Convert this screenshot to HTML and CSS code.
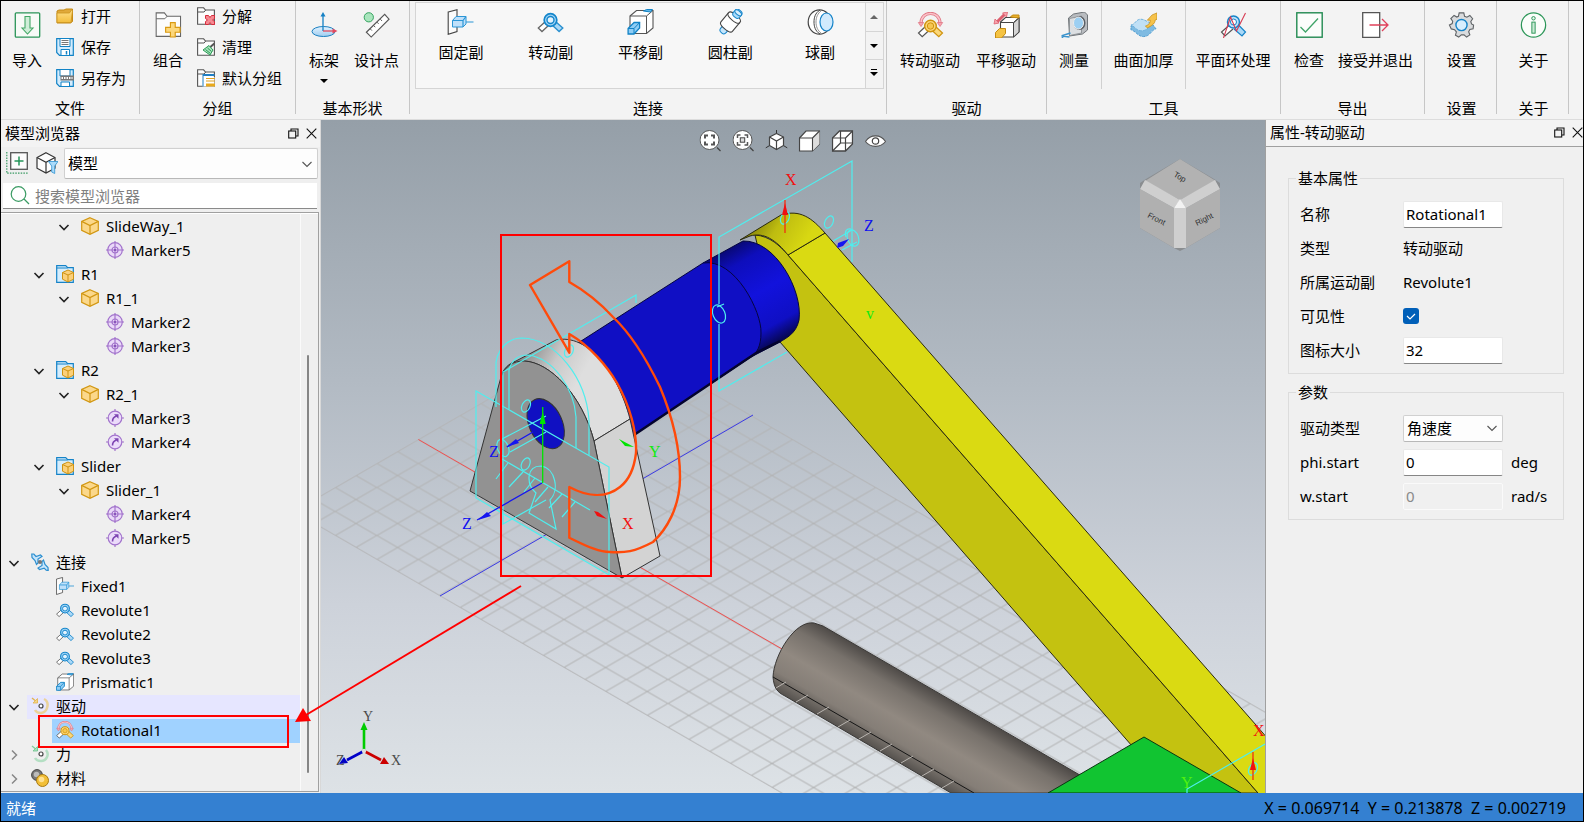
FILE: index.html
```html
<!DOCTYPE html>
<html lang="zh-CN">
<head>
<meta charset="utf-8">
<title>模型浏览器</title>
<link rel="stylesheet" href="styles.css">
</head>
<body>
<svg class="defs" aria-hidden="true">
  <defs>
    <linearGradient id="gold" x1="0" y1="0" x2="0" y2="1"><stop offset="0" stop-color="#ffe08a"/><stop offset="1" stop-color="#f3bd3c"/></linearGradient>
    <linearGradient id="sky" x1="0" y1="0" x2="0" y2="1"><stop offset="0" stop-color="#e2f2ff"/><stop offset="1" stop-color="#9fcdf0"/></linearGradient>
    <symbol id="import" viewBox="0 0 26 26"><rect x=".8" y=".8" width="24.400" height="24.400" rx="1" fill="#f7faf7" stroke="#2a9458" stroke-width="1.300"/><path d="M10.500 4.500h5v11.500h3l-5.500 6-5.500-6h3z" fill="#cfeed8" stroke="#43a766" stroke-width="1.100"/></symbol>
    <symbol id="open" viewBox="0 0 18 16"><path d="M1 3l2-1h5l2-1h6.500v12.500l-2 1.500H1z" fill="#e0a93a" stroke="#c58a14"/><path d="M1 5h12.500l2-3v0l1 .5-1.500 12H1z" fill="url(#gold)" stroke="#cc9420" stroke-width=".8"/></symbol>
    <symbol id="save" viewBox="0 0 18 18"><path d="M.7.7h16.600v16.600H3.500L.7 14.500z" fill="#d4ecfd" stroke="#1283c6" stroke-width="1.200"/><path d="M4 1v7.500h10V1" fill="#fff" stroke="#1283c6"/><path d="M5.500 2.500h7M5.500 4.500h7M5.500 6.500h7" stroke="#666" stroke-width=".9"/><path d="M5 17v-5.500h8.500V17" fill="#fff" stroke="#1283c6"/><path d="M10.500 13v3.500" stroke="#1283c6" stroke-width="1.500"/></symbol>
    <symbol id="saveas" viewBox="0 0 18 18"><path d="M.7.7h16.600v16.600H3.500L.7 14.500z" fill="#d4ecfd" stroke="#1283c6" stroke-width="1.200"/><path d="M4 1v6h10V1" fill="#fff" stroke="#1283c6"/><path d="M5 17v-4h8.500v4" fill="#fff" stroke="#1283c6"/><rect x="4.500" y="6.500" width="13.500" height="5" fill="#777"/><path d="M5.500 9h11" stroke="#fff" stroke-width="2" stroke-dasharray="1.500 1"/></symbol>
    <symbol id="folder" viewBox="0 0 18 18"><path d="M.6 17.300V.8h6L8.500 3h8.900v14.300z" fill="#fdfdfd" stroke="#555" stroke-width="1.100"/><path d="M.6 5h6.500l1.600-2" fill="none" stroke="#555"/></symbol>
    <symbol id="group" viewBox="0 0 27 27"><path d="M.7 25.300V.9h8.500L12 4.500h14v20.800z" fill="#fcfcfc" stroke="#666" stroke-width="1.100"/><path d="M.7 7h9L12 4.500" fill="none" stroke="#666"/><path d="M15.500 11h5v5h5v5h-5v5h-5v-5h-5v-5h5z" fill="#fcd77b" stroke="#d99a12" stroke-width="1.200"/></symbol>
    <symbol id="ungroup" viewBox="0 0 18 18"><use href="#folder"/><path d="M8.500 8.500h3l1.500 2 1.500-2h3v3l-2 1.500 2 1.500v3h-3l-1.500-2-1.500 2h-3v-3l2-1.500-2-1.500z" fill="#f58a92" stroke="#d62c3d"/></symbol>
    <symbol id="clean" viewBox="0 0 18 18"><use href="#folder"/><path d="M17.300 5.500l-4.500 4" stroke="#555" stroke-width="2"/><path d="M6 12l6-4.500 4 4.500-3 5z" fill="#a7e2ba" stroke="#2c9b57"/><path d="M8.500 11.500l5 4M10.500 10l4 3.500" stroke="#2c9b57"/></symbol>
    <symbol id="defgroup" viewBox="0 0 18 18"><use href="#folder"/><path d="M5.500 8v9.500h12V8z" fill="#fff"/><path d="M5.500 6h12" stroke="#1f7fc4" stroke-width="2"/><path d="M6 7v10.500" stroke="#1f7fc4"/><path d="M9 9.500h9M9 12h9" stroke="#e0a020" stroke-width="1.200"/><path d="M9 14.500h9v3H9z" fill="#e8a91c"/></symbol>
    <symbol id="frame" viewBox="0 0 26 26"><ellipse cx="12" cy="19.500" rx="11.500" ry="5" fill="url(#sky)" stroke="#1a7fc0"/><path d="M11.500 19V3" stroke="#1480c4" stroke-width="1.300"/><path d="M9 4.500L11.500 0 14 4.500z" fill="#1480c4"/><path d="M11.500 19H22" stroke="#e24a5e" stroke-width="1.300"/><path d="M21 16.500l5 2.500-5 2.500z" fill="#e24a5e"/></symbol>
    <symbol id="point" viewBox="0 0 27 27"><circle cx="5.500" cy="5.500" r="4.800" fill="#a9e5bd" stroke="#31a05c"/><path d="M3 21L22 2.500l4.500 5L8 26z" fill="#fff" stroke="#555" stroke-width="1.200"/><path d="M7 17.500l1.700 1.800M10.500 14l1.700 1.800M14 10.500l1.700 1.800M17.500 7.500l1.700 1.800" stroke="#555"/></symbol>
    <symbol id="fixed" viewBox="0 0 26 26"><path d="M.7 3L9.500.7v21.800L.7 25.300z" fill="#fbfbfb" stroke="#444" stroke-width="1.100"/><path d="M5 11.500V18h10.500l3-3V7.500H8.500z" fill="#bfe0fa" stroke="#2b96d6"/><path d="M5 11.500h10.500V18M15.500 11.500l3-4M18.500 13H26" fill="none" stroke="#2b96d6" stroke-width="1.200"/></symbol>
    <symbol id="revolute" viewBox="0 0 26 26"><path d="M8 12.500L.8 19l3.700 3.500 7-6.500" fill="#fff" stroke="#666" stroke-width="1.300"/><path d="M18 12.500l7.300 6.500-3.700 3.500-7-6.500" fill="#a9d8f7" stroke="#2a90cf" stroke-width="1.400"/><circle cx="13" cy="11" r="6.300" fill="#a5d6f7" stroke="#1486cb" stroke-width="1.700"/><circle cx="13" cy="11" r="3.500" fill="#e4f3fe" stroke="#1486cb" stroke-width="1.400"/></symbol>
    <symbol id="prismatic" viewBox="0 0 26 26"><path d="M2.500 7L9 1.500h16.500V19L19 24.500H2.500z" fill="#fff" stroke="#555" stroke-width="1.100"/><path d="M2.500 7H19v17.500M19 7l6.500-5.500" fill="none" stroke="#555"/><path d="M16 2l3-1.500h6L23 3z" fill="#5db6e8" stroke="#1283c6"/><path d="M.6 19.500l6-6h5.500V19L6.500 25H.6z" fill="#8fcdf5" stroke="#1283c6" stroke-width="1.300"/><path d="M.6 19.500h5.900V25M6.500 19.500l5.600-6" fill="none" stroke="#1283c6"/></symbol>
    <symbol id="cylindrical" viewBox="0 0 26 26"><g transform="rotate(40 13 13)"><rect x="9.500" y="17" width="7" height="10" rx="3" fill="#c5e6fc" stroke="#1686cb"/><path d="M5.500 7c0-4 15-4 15 0v12c0 4-15 4-15 0z" fill="#fff" stroke="#444" stroke-width="1.100"/><path d="M5.500 7.500c0 4 15 4 15 0" fill="none" stroke="#444"/><rect x="9" y="-2" width="8" height="8.500" rx="3" fill="#aadaf8" stroke="#1686cb"/><ellipse cx="13" cy="1" rx="4" ry="2" fill="#d8effd" stroke="#1686cb"/></g></symbol>
    <symbol id="ball" viewBox="0 0 26 26"><ellipse cx="12" cy="13" rx="11.300" ry="12.200" fill="#fff" stroke="#444" stroke-width="1.200"/><path d="M12.500 1c-5 3-6 8-6 12s1 9 6 12" fill="none" stroke="#444"/><path d="M14 1.500c-4 3-5.500 7-5.500 11.500s1.500 8.500 5.500 11.500" fill="none" stroke="#777" stroke-width=".8"/><ellipse cx="19" cy="13" rx="6.500" ry="9" fill="#d1eafd" stroke="#1583c8" stroke-width="1.200"/></symbol>
    <symbol id="rotdrive" viewBox="0 0 26 26"><path d="M8 14.500L1 21l3.700 3.700 7-6.500" fill="#fff" stroke="#555" stroke-width="1.200"/><path d="M3.500 11.500c0-13.500 19-13.500 19 0" fill="none" stroke="#e07986" stroke-width="3.200"/><path d="M3.500 11.500c0-13.500 19-13.500 19 0" fill="none" stroke="#fbc3c9" stroke-width="1.500"/><path d="M.8 10.500h5.400L3.500 14.500zM19.800 10.500h5.400L22.500 14.500z" fill="#f6a4ad" stroke="#e07986" stroke-width=".8"/><path d="M18 14.500l7 6.500-3.700 3.700-7-6.500" fill="#fbd779" stroke="#d0930e" stroke-width="1.200"/><circle cx="13" cy="14" r="5.800" fill="#fbd779" stroke="#d0930e" stroke-width="1.400"/><circle cx="13" cy="14" r="3.200" fill="#f6c750" stroke="#d0930e"/></symbol>
    <symbol id="prisdrive" viewBox="0 0 26 26"><path d="M7 10l5-4.500h13.500V20L20 25H7z" fill="#fff" stroke="#444" stroke-width="1.100"/><path d="M20 10.500V25M7 10.500h13l5.500-5" fill="none" stroke="#444"/><path d="M20 11l5.500-5V20L20 25z" fill="#d5d5d5" stroke="#444"/><path d="M17 5l2-2h6.500v3z" fill="#e9af2d" stroke="#c48b10"/><path d="M2 20.500l4-4h6v5L8 26H2z" fill="#f5c343" stroke="#c48b10"/><path d="M3 10.500L11.500 2" stroke="#dd5f6e" stroke-width="3"/><path d="M.5 12l1-5 4 4zM14 0l-5 1 4 4z" fill="#f6a4ad" stroke="#dd5f6e" stroke-width=".8"/></symbol>
    <symbol id="measure" viewBox="0 0 26 26"><path d="M7 6l5-4 11-2 3 3v15l-5 4-13 2z" fill="#b9bcc0" stroke="#6f7478"/><path d="M8 6.500L20 4v17L8 23.500z" fill="#dcdfe2" stroke="#83888c" stroke-width=".8"/><ellipse cx="18" cy="11" rx="6" ry="7" fill="#5b6066"/><ellipse cx="17" cy="11" rx="5" ry="6" fill="#9ccff2" stroke="#eee"/><path d="M9 21L1 23.500v3M0 24l8 1" fill="none" stroke="#3b93cc" stroke-width="1.700"/></symbol>
    <symbol id="thicken" viewBox="0 0 28 26"><path d="M1 14c4 0 5-5 10-5s7 3 12 3l4 5c-5 1-6 8-13 8C8 25 6 19 1 18z" fill="#7fbbe2" stroke="#4b9bd0" stroke-dasharray="3 1"/><path d="M1 13c4 0 5-6 10-6s7 4 13 4c-4 3-6 8-12 8s-6-4-11-6z" fill="#c0e0f6" stroke="#68aedb" stroke-dasharray="3 1"/><path d="M16 14c4-1 5-4 5-6h-3l5-5.500L28 .5V7l-2 1c0 4-4 6-8 8z" fill="#f6c24a" stroke="#c58f18" stroke-width=".8"/></symbol>
    <symbol id="planar" viewBox="0 0 26 26"><path d="M9 13l-8 7 3.500 4 8-7" fill="#fff" stroke="#555" stroke-width="1.200"/><path d="M17 12l8 8-3.500 4-8-7" fill="#a9d8f7" stroke="#1583c8" stroke-width="1.200"/><circle cx="13" cy="10" r="6" fill="#bfe2fb" stroke="#1583c8" stroke-width="1.500"/><circle cx="13" cy="10" r="3" fill="#fff" stroke="#1583c8"/><path d="M3 26L10 5l6 14L25 1" fill="none" stroke="#d63a52" stroke-width="1.100"/></symbol>
    <symbol id="check" viewBox="0 0 27 26"><rect x=".8" y=".8" width="25.400" height="24.400" fill="#fbfdfb" stroke="#228a51" stroke-width="1.400"/><path d="M4.500 15l5 5L22 6.500" fill="none" stroke="#3fa468" stroke-width="1.300"/></symbol>
    <symbol id="exit" viewBox="0 0 27 26"><path d="M.7.7h17v24.600H.7z" fill="#fff" stroke="#555" stroke-width="1.300"/><path d="M7.500 13H25M20 7l6 6-6 6" fill="none" stroke="#e0405a" stroke-width="1.300"/></symbol>
    <symbol id="gear" viewBox="0 0 28 28"><path d="M11.500 1h5l.8 3.600 2.500 1L23 3.700l3 3.500-2 3 .8 2.600L27 14l-.5 4-3.500.8-1.300 2.400 1.300 3.400-3.500 2.400-2.800-2.400h-2.900L11 27l-3.500-2 1-3.500L6.500 19 3 18.200 1 14l3-1.500L4.500 10l-2-3L6 3.700l3 1.700 1.700-.8z" fill="#d9dbdd" stroke="#5f6366" stroke-width="1.200"/><circle cx="14" cy="14" r="6" fill="#d8eefe" stroke="#1583c8" stroke-width="1.500"/></symbol>
    <symbol id="info" viewBox="0 0 27 27"><circle cx="13.500" cy="13.500" r="12.600" fill="#fafdfa" stroke="#2c9658" stroke-width="1.300"/><circle cx="13.500" cy="6.500" r="1.800" fill="#e4f5e9" stroke="#2c9658"/><rect x="11.800" y="10.500" width="3.400" height="11.500" fill="#c9ead4" stroke="#2c9658"/></symbol>
    <symbol id="restore" viewBox="0 0 11 11"><path d="M3 3V1h7v7H8" fill="none" stroke="#111" stroke-width="1.100"/><rect x=".7" y="3" width="7" height="7" fill="none" stroke="#111" stroke-width="1.100"/></symbol>
    <symbol id="close" viewBox="0 0 11 11"><path d="M.7.7l9.600 9.600M10.300.7L.7 10.300" stroke="#111" stroke-width="1.100"/></symbol>
    <symbol id="addtree" viewBox="0 0 22 22"><rect x="4.700" y=".7" width="16.600" height="16.600" fill="#fcfcfc" stroke="#555" stroke-width="1.300"/><path d="M13 4.500v9M8.500 9h9" stroke="#24955a" stroke-width="1.500"/><path d="M.8 0v21.200H22" fill="none" stroke="#3a9a63" stroke-width="1.200" stroke-dasharray="1.500 1.200"/></symbol>
    <symbol id="filter" viewBox="0 0 22 22"><path d="M10 .8l9 4.700v10.700L10 21 1 16.200V5.500z" fill="#fdfdfd" stroke="#333" stroke-width="1.200"/><path d="M1 5.500l9 4.700 9-4.700M10 10.200V21" fill="none" stroke="#333" stroke-width="1.200"/><path d="M12.500 9.500H22L18.700 14v7.500l-3-1.500V14z" fill="#a9dafa" stroke="#3f9cd6" stroke-width=".9"/></symbol>
    <symbol id="search" viewBox="0 0 20 19"><circle cx="8.500" cy="8" r="7.300" fill="none" stroke="#3a9b63" stroke-width="1.200"/><path d="M14 13l5 5" stroke="#3a9b63" stroke-width="1.300"/></symbol>
    <symbol id="cube" viewBox="0 0 18 18"><path d="M9 .7l8.300 3.700v9L9 17.300.7 13.400v-9z" fill="#fbd88b" stroke="#d29712" stroke-width="1.200"/><path d="M.7 4.400L9 8.500l8.300-4.100M9 8.500v8.800" fill="none" stroke="#d29712" stroke-width="1.200"/></symbol>
    <symbol id="body" viewBox="0 0 18 18"><path d="M.7 17.300V.7h9l2 2h5.600v14.600z" fill="#d5edfd" stroke="#1583c8" stroke-width="1.200"/><path d="M.7 3h11" stroke="#1583c8"/><path d="M12 5l5.500 2.500v6.700L12 17l-5.500-2.800V7.500z" fill="#fbd07a" stroke="#cf9310"/><path d="M6.500 7.500L12 10l5.500-2.500M12 10v7" fill="none" stroke="#cf9310"/></symbol>
    <symbol id="marker" viewBox="0 0 18 18"><circle cx="9" cy="9" r="7.300" fill="#ead9f8" stroke="#a273cc" stroke-width="1.200"/><circle cx="9" cy="9" r="3" fill="none" stroke="#a273cc" stroke-width="1.200"/><path d="M9 0v18M0 9h18" stroke="#a273cc" stroke-width="1.200"/><circle cx="9" cy="9" r="1" fill="#7d44b2"/></symbol>
    <symbol id="markerref" viewBox="0 0 18 18"><path d="M9 0v18M0 9h18" stroke="#a273cc" stroke-width="1.200"/><circle cx="9" cy="9" r="6.800" fill="#ebdbfa" stroke="#a273cc" stroke-width="1.200"/><path d="M6.500 12.500c0-3 1-4.500 4-5.500" fill="none" stroke="#7d44b2" stroke-width="1.600"/><path d="M8 5.200h4.500v4.500z" fill="#7d44b2"/></symbol>
    <symbol id="joints" viewBox="0 0 18 18"><path d="M.8 1l2 0L5 3.500 9.500 2 11 3.500 7 6v4L5.500 11.500 4 7.500 1 4.500z" fill="#c7e5fb" stroke="#2c8fd0" stroke-width="1.200"/><path d="M17.200 17.500l-2-.3-2-2-4.700 1.300L7 15l4-2.500v-4L12.500 7l1.500 4.500 3 3z" fill="#c7e5fb" stroke="#2c8fd0" stroke-width="1.200"/><circle cx="9" cy="9" r="2.100" fill="#777"/></symbol>
    <symbol id="drives" viewBox="0 0 18 18"><path d="M1 1l5.500 4.500" stroke="#e2b44c" stroke-width="1.300"/><path d="M6.500 1.500V6H2z" fill="#f4d58a" stroke="#e2b44c" stroke-width=".8"/><path d="M13 2c6 3 4 13-3 14-3 0-5-1-6-3" fill="none" stroke="#ead29a" stroke-width="2.500"/><circle cx="10" cy="9" r="2" fill="#fff" stroke="#444" stroke-width="1.200"/></symbol>
    <symbol id="forces" viewBox="0 0 18 18"><path d="M1 1l5.500 4.500" stroke="#7fcf9c" stroke-width="1.300"/><path d="M6.500 1.500V6H2z" fill="#a8e2bb" stroke="#6fc38d" stroke-width=".8"/><path d="M15 5c4 5 0 11-5 11-3 0-5-1-6-3" fill="none" stroke="#b4dfc3" stroke-width="2.500"/><circle cx="10" cy="9" r="2" fill="#fff" stroke="#444" stroke-width="1.200"/></symbol>
    <symbol id="materials" viewBox="0 0 18 18"><circle cx="6" cy="6" r="5.400" fill="#777" stroke="#444"/><circle cx="5.500" cy="5.500" r="2.800" fill="#bbb"/><circle cx="11.500" cy="11.500" r="6" fill="#f2bf37" stroke="#a87a12"/><circle cx="10.500" cy="10.500" r="2.800" fill="#ffe193"/></symbol>
    <symbol id="down" viewBox="0 0 12 12"><path d="M1.500 4L6 8.500 10.500 4" fill="none" stroke="#222" stroke-width="1.600"/></symbol>
    <symbol id="right" viewBox="0 0 12 12"><path d="M4 1.500L8.500 6 4 10.500" fill="none" stroke="#888" stroke-width="1.500"/></symbol>
    <symbol id="combo" viewBox="0 0 12 8"><path d="M1.500 2L6 6.500 10.500 2" fill="none" stroke="#555" stroke-width="1.100"/></symbol>
    <symbol id="fit" viewBox="0 0 22 22"><path d="M17.500 17.500l3.500 3.500" stroke="#444" stroke-width="1.200"/><circle cx="10" cy="10" r="9.500" fill="#fff" stroke="#555"/><path d="M5.500 8.500v-3h3M11.500 5.500h3v3M14.500 11.500v3h-3M8.500 14.500h-3v-3" fill="none" stroke="#555" stroke-width="2"/></symbol>
    <symbol id="fitsel" viewBox="0 0 22 22"><path d="M17.500 17.500l3.500 3.500" stroke="#444" stroke-width="1.200"/><circle cx="10" cy="10" r="9.500" fill="#fff" stroke="#555"/><path d="M5 8V5h3M12 5h3v3M15 12v3h-3M8 15H5v-3" fill="none" stroke="#555" stroke-width="1.500"/><rect x="7.800" y="7.800" width="4.400" height="4.400" fill="#ddd" stroke="#444"/></symbol>
    <symbol id="iso" viewBox="0 0 22 22"><path d="M11 0v6M0 18l5-3M22 18l-5-3" stroke="#333"/><path d="M11 3.500l7 3.500v8.500l-7 4-7-4V7z" fill="#fff" stroke="#444" stroke-width="1.200"/><path d="M4 7l7 4 7-4M11 11v8.500" fill="none" stroke="#444" stroke-width="1.200"/></symbol>
    <symbol id="shaded" viewBox="0 0 22 22"><path d="M1 8L7.500 1H21v13l-7 7H1z" fill="#fff" stroke="#444" stroke-width="1.200"/><path d="M14 8l7-7v13l-7 7z" fill="#ddd"/><path d="M1 8h13v13M14 8l7-7" fill="none" stroke="#444" stroke-width="1.100"/></symbol>
    <symbol id="wire" viewBox="0 0 22 22"><path d="M1 8L8 1h13v13l-7 7H1z" fill="#fff" stroke="#444" stroke-width="1.300"/><path d="M1 8h13v13M14 8l7-7M9 1v12h12M9 13l-8 8" fill="none" stroke="#444" stroke-width="1.200"/></symbol>
    <symbol id="eye" viewBox="0 0 22 22"><path d="M1 11.500C6 4 16 4 21 11.500 16 18 6 18 1 11.500z" fill="#fff" stroke="#555" stroke-width="1.100"/><circle cx="11" cy="11" r="3.200" fill="#fff" stroke="#444" stroke-width="1.200"/></symbol>
  </defs>
</svg>

<div class="app">
  <header class="ribbon">
    <section class="group file">
      <div class="body">
        <button class="big"><svg class="i26"><use href="#import"/></svg>导入</button>
        <div class="stack">
          <button class="small"><svg class="i18"><use href="#open"/></svg>打开</button>
          <button class="small"><svg class="i18"><use href="#save"/></svg>保存</button>
          <button class="small"><svg class="i18"><use href="#saveas"/></svg>另存为</button>
        </div>
      </div>
      <h2>文件</h2>
    </section>
    <section class="group grouping">
      <div class="body">
        <button class="big"><svg class="i26"><use href="#group"/></svg>组合</button>
        <div class="stack">
          <button class="small"><svg class="i18"><use href="#ungroup"/></svg>分解</button>
          <button class="small"><svg class="i18"><use href="#clean"/></svg>清理</button>
          <button class="small"><svg class="i18"><use href="#defgroup"/></svg>默认分组</button>
        </div>
      </div>
      <h2>分组</h2>
    </section>
    <section class="group shapes">
      <div class="body">
        <button class="big"><svg class="i26"><use href="#frame"/></svg>标架<span class="caret"></span></button>
        <button class="big"><svg class="i26"><use href="#point"/></svg>设计点</button>
      </div>
      <h2>基本形状</h2>
    </section>
    <section class="group joints">
      <div class="body">
        <div class="gallery">
          <button class="big"><svg class="i26"><use href="#fixed"/></svg>固定副</button>
          <button class="big"><svg class="i26"><use href="#revolute"/></svg>转动副</button>
          <button class="big"><svg class="i26"><use href="#prismatic"/></svg>平移副</button>
          <button class="big"><svg class="i26"><use href="#cylindrical"/></svg>圆柱副</button>
          <button class="big"><svg class="i26"><use href="#ball"/></svg>球副</button>
          <div class="spin">
            <button aria-label="上移"><span class="caret up"></span></button>
            <button aria-label="下移"><span class="caret"></span></button>
            <button aria-label="更多"><span class="caret more"></span></button>
          </div>
        </div>
      </div>
      <h2>连接</h2>
    </section>
    <section class="group drive">
      <div class="body">
        <button class="big"><svg class="i26"><use href="#rotdrive"/></svg>转动驱动</button>
        <button class="big"><svg class="i26"><use href="#prisdrive"/></svg>平移驱动</button>
      </div>
      <h2>驱动</h2>
    </section>
    <section class="group tools">
      <div class="body">
        <button class="big"><svg class="i26"><use href="#measure"/></svg>测量</button>
        <button class="big"><svg class="i26"><use href="#thicken"/></svg>曲面加厚</button>
        <button class="big"><svg class="i26"><use href="#planar"/></svg>平面环处理</button>
      </div>
      <h2>工具</h2>
    </section>
    <section class="group export">
      <div class="body">
        <button class="big"><svg class="i26"><use href="#check"/></svg>检查</button>
        <button class="big"><svg class="i26"><use href="#exit"/></svg>接受并退出</button>
      </div>
      <h2>导出</h2>
    </section>
    <section class="group single">
      <div class="body"><button class="big"><svg class="i26"><use href="#gear"/></svg>设置</button></div>
      <h2>设置</h2>
    </section>
    <section class="group single">
      <div class="body"><button class="big"><svg class="i26"><use href="#info"/></svg>关于</button></div>
      <h2>关于</h2>
    </section>
  </header>

  <main class="work">
    <aside class="browser">
      <div class="dock-title"><h1>模型浏览器</h1>
        <button aria-label="浮动"><svg class="i11"><use href="#restore"/></svg></button>
        <button aria-label="关闭"><svg class="i11"><use href="#close"/></svg></button>
      </div>
      <div class="tools-row">
        <button aria-label="展开"><svg class="i22"><use href="#addtree"/></svg></button>
        <button aria-label="筛选"><svg class="i22"><use href="#filter"/></svg></button>
        <div class="select"><select aria-label="视图"><option>模型</option></select><svg><use href="#combo"/></svg></div>
      </div>
      <div class="search"><svg><use href="#search"/></svg><input type="text" aria-label="搜索" placeholder="搜索模型浏览器"></div>
      <div class="tree-frame">
        <ul class="tree">
          <li class="l3"><svg class="tw"><use href="#down"/></svg><span><svg class="i18"><use href="#cube"/></svg>SlideWay_1</span></li>
          <li class="l4"><i class="tw"></i><span><svg class="i18"><use href="#marker"/></svg>Marker5</span></li>
          <li class="l2"><svg class="tw"><use href="#down"/></svg><span><svg class="i18"><use href="#body"/></svg>R1</span></li>
          <li class="l3"><svg class="tw"><use href="#down"/></svg><span><svg class="i18"><use href="#cube"/></svg>R1_1</span></li>
          <li class="l4"><i class="tw"></i><span><svg class="i18"><use href="#marker"/></svg>Marker2</span></li>
          <li class="l4"><i class="tw"></i><span><svg class="i18"><use href="#marker"/></svg>Marker3</span></li>
          <li class="l2"><svg class="tw"><use href="#down"/></svg><span><svg class="i18"><use href="#body"/></svg>R2</span></li>
          <li class="l3"><svg class="tw"><use href="#down"/></svg><span><svg class="i18"><use href="#cube"/></svg>R2_1</span></li>
          <li class="l4"><i class="tw"></i><span><svg class="i18"><use href="#markerref"/></svg>Marker3</span></li>
          <li class="l4"><i class="tw"></i><span><svg class="i18"><use href="#markerref"/></svg>Marker4</span></li>
          <li class="l2"><svg class="tw"><use href="#down"/></svg><span><svg class="i18"><use href="#body"/></svg>Slider</span></li>
          <li class="l3"><svg class="tw"><use href="#down"/></svg><span><svg class="i18"><use href="#cube"/></svg>Slider_1</span></li>
          <li class="l4"><i class="tw"></i><span><svg class="i18"><use href="#marker"/></svg>Marker4</span></li>
          <li class="l4"><i class="tw"></i><span><svg class="i18"><use href="#markerref"/></svg>Marker5</span></li>
          <li class="l1"><svg class="tw"><use href="#down"/></svg><span><svg class="i18"><use href="#joints"/></svg>连接</span></li>
          <li class="l2"><i class="tw"></i><span><svg class="i18"><use href="#fixed"/></svg>Fixed1</span></li>
          <li class="l2"><i class="tw"></i><span><svg class="i18"><use href="#revolute"/></svg>Revolute1</span></li>
          <li class="l2"><i class="tw"></i><span><svg class="i18"><use href="#revolute"/></svg>Revolute2</span></li>
          <li class="l2"><i class="tw"></i><span><svg class="i18"><use href="#revolute"/></svg>Revolute3</span></li>
          <li class="l2"><i class="tw"></i><span><svg class="i18"><use href="#prismatic"/></svg>Prismatic1</span></li>
          <li class="l1 hover"><svg class="tw"><use href="#down"/></svg><span><svg class="i18"><use href="#drives"/></svg>驱动</span></li>
          <li class="l2 selected"><i class="tw"></i><span><svg class="i18"><use href="#rotdrive"/></svg>Rotational1</span></li>
          <li class="l1"><svg class="tw"><use href="#right"/></svg><span><svg class="i18"><use href="#forces"/></svg>力</span></li>
          <li class="l1"><svg class="tw"><use href="#right"/></svg><span><svg class="i18"><use href="#materials"/></svg>材料</span></li>
        </ul>
        <div class="scroll"><div class="thumb"></div></div>
      </div>
    </aside>

    <section class="viewport">
      <svg class="scene" viewBox="321 120 944 673" preserveAspectRatio="xMinYMin slice">
        <defs>
          <pattern id="grid" x="293.6" y="499.5" width="41.6" height="24" patternUnits="userSpaceOnUse"><path d="M0 12L20.800 0 41.600 12 20.800 24z" fill="none" stroke="#b3b4b5" stroke-width="1"/></pattern>
          <linearGradient id="cap" gradientUnits="userSpaceOnUse" x1="756" y1="222" x2="800" y2="250"><stop offset="0" stop-color="#8c8a0b"/><stop offset=".4" stop-color="#bebc10"/><stop offset="1" stop-color="#d8d812"/></linearGradient>
          <linearGradient id="steel" gradientUnits="userSpaceOnUse" x1="900" y1="671" x2="858" y2="743"><stop offset="0" stop-color="#4f4b48"/><stop offset=".2" stop-color="#77716b"/><stop offset=".5" stop-color="#918981"/><stop offset=".75" stop-color="#857e77"/><stop offset="1" stop-color="#4b4845"/></linearGradient>
          <linearGradient id="blue" gradientUnits="userSpaceOnUse" x1="722" y1="250" x2="776" y2="346"><stop offset="0" stop-color="#08086e"/><stop offset=".18" stop-color="#0e0ebc"/><stop offset=".5" stop-color="#1212dc"/><stop offset=".82" stop-color="#0f0fc4"/><stop offset="1" stop-color="#050542"/></linearGradient>
          <linearGradient id="arch" gradientUnits="userSpaceOnUse" x1="526" y1="352" x2="578" y2="382"><stop offset="0" stop-color="#8d8d8d"/><stop offset=".5" stop-color="#c9c9c9"/><stop offset="1" stop-color="#dedede"/></linearGradient>
        </defs>
        <path d="M293.600 511.500L605.600 331.500 1505.600 850.700 1193.600 1030.700z" fill="url(#grid)" stroke="#b3b4b5" stroke-width=".6"/>
        <path d="M418.400 439.500L782 649" stroke="#f05050" fill="none"/>
        <path d="M440 596L753 415" stroke="#3a3ae6" fill="none"/>

        <g stroke="#2a2a10" stroke-width="1" stroke-linejoin="round">
          <path d="M755 235C770 236 780 246 788 255L1258 793H1173L780 342z" fill="#c4c210"/>
          <path d="M788 255L825 233 1256 725 1268 739V805L1258 793z" fill="#dada12"/>
          <path d="M740 240L781 215C800 209 812 218 825 233L788 255C776 240 764 232 750 236z" fill="url(#cap)"/>
        </g>
        <g stroke-width="1">
          <path d="M703 263L743 241C775 240 803 290 799 320 796 334 786 338 780 342L751 357 690 300z" fill="url(#blue)" stroke="#050540"/>
          <path d="M578 343L703 263C735 258 762 312 761 333 761 346 757 353 751 357L632 436z" fill="#100fc4" stroke="#050540"/>
          <path d="M634 435L756 353 780 341" fill="none" stroke="#04042e" stroke-width="2.500"/>
        </g>
        <g stroke="#333" stroke-width="1" stroke-linejoin="round">
          <path d="M501 377C503 369 508 364 516 361L556 340C588 333 618 373 630 419L594 441C582 395 550 362 524 361z" fill="url(#arch)"/>
          <path d="M594 441L630 419 660 556 622 578z" fill="#d3d3d3"/>
          <path d="M470 491L501 377C505 366 513 361 524 361 550 362 582 395 594 441L622 578z" fill="#929292"/>
          <ellipse cx="545.700" cy="423.700" rx="16.500" ry="26.500" transform="rotate(-25 545.700 423.700)" fill="#1010c2"/>
        </g>

        <path d="M773 677C774 655 795 620 814 623L823 626 1085 778 1049 793H951L785 696C777 692 774 688 773 677z" fill="url(#steel)" stroke="#3a3836"/>
        <path d="M773 677L974 793" stroke="#161616" fill="none"/>
        <path d="M776 688l10-6M796 702l12-7M817 714l12-7M838 727l12-7M859 739l12-7M880 751l12-7M901 763l12-7M922 776l12-7M942 788l12-7" stroke="#b9b5b0" fill="none"/>
        <path d="M1048 793L1144 737 1241 793z" fill="#11c431" stroke="#0a3512"/>

        <g fill="none" stroke="#4feeee" stroke-width="1.200">
          <path d="M719 304V237L852 161V262M719 324V391L787 352"/>
          <ellipse cx="719" cy="314" rx="6" ry="9.500" transform="rotate(-22 719 314)"/><path d="M717 307l7-3"/>
          <ellipse cx="785" cy="218" rx="4" ry="6.500" transform="rotate(25 785 218)"/>
          <ellipse cx="829" cy="222" rx="4" ry="6.500" transform="rotate(25 829 222)"/>
          <ellipse cx="853" cy="238" rx="5.500" ry="8.500" transform="rotate(-20 853 238)"/>
          <path d="M833 241L852 230M842 250L857 242M846 237c-2-6 1-9 5-8"/>
          <path d="M476 391L609 467V575L476 498z"/>
          <path d="M636 303V295L503 372V524L546 500"/>
          <path d="M496 407V362C500 342 514 338 522 338 556 339 586 378 589 420V455"/>
          <path d="M509 409V370C512 359 519 355 528 355 553 358 574 388 576 417V448"/>
          <ellipse cx="526" cy="406" rx="4" ry="6.500" transform="rotate(25 526 406)"/>
          <ellipse cx="525.700" cy="464" rx="4" ry="6.500" transform="rotate(25 525.700 464)"/>
          <ellipse cx="569" cy="351" rx="4" ry="6.500" transform="rotate(25 569 351)"/>
          <ellipse cx="503" cy="448" rx="5.500" ry="9" transform="rotate(-22 503 448)"/>
          <path d="M500 440L546 416M510 452L546 432M502 459L590 510"/>
          <path d="M508 463L496 479M523 472L509 487M535 478L524 492M548 487L535 502M562 494L549 508M575 502L562 517"/>
          <path d="M529 513L536 493C526 484 526 466 541 466 555 468 560 490 550 500L556 529z"/>
          <path d="M1265 744L1187 789V793"/>
          <ellipse cx="1253" cy="769" rx="4" ry="6.500" transform="rotate(25 1253 769)"/>
        </g>
        <g fill="none" stroke-width="1.300">
          <path d="M542.700 483V407" stroke="#00e400"/>
          <path d="M542 483L477 520M533 432L507 447" stroke="#1515f0"/>
          <path d="M785 200V233M1253 752V780" stroke="#f03010"/>
        </g>
        <path d="M542.700 411l3 13h-6zM619 439l15 8-9-1z" fill="#00e400"/>
        <path d="M478 520l9-8 4 4zM506 447l10-8 3 4zM849 239l-6 7-6 2 1-5z" fill="#1515f0"/>
        <path d="M785 203l3 12h-6zM607 519l-10-3-3-5 4 1zM1253 758l3 12h-6z" fill="#f01010"/>
        <path d="M569.300 261.300L530 285 569.300 352.700V334C590 346 607 366 617 383 630 406 637 432 636 453 634 470 629 480 620 487 605 499 586 496 569.300 487V537.700C590 548 600 552 610 552 625 553 634 552 653 542 666 530 680 508 680 477 680 444 670 411 660 387 645 356 630 333 613 317 601 304 587 292 569.300 282z" fill="none" stroke="#ff4a0a" stroke-width="2.400" stroke-linejoin="round"/>
        <g class="axis">
          <text x="785" y="185" fill="#f21010">X</text><text x="864" y="231" fill="#1010f0">Z</text><text x="866" y="319" fill="#10ea10">v</text>
          <text x="489" y="457" fill="#1010f0">Z</text><text x="462" y="529" fill="#1010f0">Z</text><text x="622" y="529" fill="#f21010">X</text><text x="649" y="457" fill="#10ea10">Y</text>
          <text x="1253" y="736" fill="#f21010">X</text><text x="1181" y="788" fill="#50f010">Y</text>
        </g>
        <g fill="none" stroke-width="2.600"><path d="M364 750V730" stroke="#00cc00"/><path d="M364 751L347 760" stroke="#0000c8"/><path d="M364 751L381 760" stroke="#cc0000"/></g>
        <path d="M364 722l3.500 8h-7z" fill="#00cc00"/><path d="M339 764l5-7 4 6z" fill="#0000c8"/><path d="M389 764l-9 0 4-7z" fill="#cc0000"/><circle cx="364" cy="751" r="2.200" fill="#ddd"/>
        <g class="triad"><text x="363" y="721">Y</text><text x="336" y="765">Z</text><text x="391" y="765">X</text></g>
        <g>
          <path d="M1140 183l6-4 34-20 34 20 6 4v45l-34 20-6 3-6-3-34-20z" fill="#8a8d90"/>
          <path d="M1145 181L1180 159 1216 181 1180 200z" fill="#b2b2b2"/>
          <path d="M1140 189L1174 208V248L1140 228z" fill="#b0b0b0"/><path d="M1186 208L1220 189V228L1186 248z" fill="#b0b0b0"/>
          <path d="M1145 180L1180 200 1174 208 1140 189zM1215 180L1180 200 1186 208 1220 189zM1174 208h12v40h-12z" fill="#cfcfcf"/>
          <path d="M1180 199l6 9h-12z" fill="#f2f2f2"/>
        </g>
        <g class="navcube"><text transform="translate(1173 176) rotate(30)">Top</text><text transform="translate(1147 217) rotate(27)">Front</text><text transform="translate(1197 226) rotate(-27)">Right</text></g>
      </svg>
      <div class="viewtools">
        <button aria-label="适合窗口"><svg class="i22"><use href="#fit"/></svg></button>
        <button aria-label="适合所选"><svg class="i22"><use href="#fitsel"/></svg></button>
        <button aria-label="等轴测"><svg class="i22"><use href="#iso"/></svg></button>
        <button aria-label="着色"><svg class="i22"><use href="#shaded"/></svg></button>
        <button aria-label="线框"><svg class="i22"><use href="#wire"/></svg></button>
        <button aria-label="可见"><svg class="i22"><use href="#eye"/></svg></button>
      </div>
    </section>

    <aside class="props">
      <div class="dock-title"><h1>属性-转动驱动</h1>
        <button aria-label="浮动"><svg class="i11"><use href="#restore"/></svg></button>
        <button aria-label="关闭"><svg class="i11"><use href="#close"/></svg></button>
      </div>
      <form class="form">
        <fieldset>
          <legend>基本属性</legend>
          <div class="row"><label for="name">名称</label><input id="name" type="text" value="Rotational1"></div>
          <div class="row"><span>类型</span><span>转动驱动</span></div>
          <div class="row"><span>所属运动副</span><span>Revolute1</span></div>
          <div class="row"><label for="vis">可见性</label><input id="vis" type="checkbox" checked></div>
          <div class="row"><label for="size">图标大小</label><input id="size" type="text" value="32"></div>
        </fieldset>
        <fieldset>
          <legend>参数</legend>
          <div class="row"><label for="kind">驱动类型</label><div class="select"><select id="kind"><option>角速度</option></select><svg><use href="#combo"/></svg></div></div>
          <div class="row"><label for="phi">phi.start</label><input id="phi" type="text" value="0"><span>deg</span></div>
          <div class="row"><label for="w">w.start</label><input id="w" type="text" value="0" disabled><span>rad/s</span></div>
        </fieldset>
      </form>
    </aside>
  </main>

  <footer class="status"><span class="ready">就绪</span><span class="coords">X = 0.069714  Y = 0.213878  Z = 0.002719</span></footer>

  <svg class="callouts" viewBox="1 1 1582 820" preserveAspectRatio="xMinYMin meet" aria-hidden="true">
    <path d="M501 235H711V576H501zM39 716H288V747H39z" fill="none" stroke="#f00" stroke-width="2"/>
    <path d="M521 586L306 715" stroke="#f00" stroke-width="2"/>
    <path d="M295 722l8-14 8 13z" fill="#f00"/>
  </svg>
</div>
</body>
</html>
```

FILE: styles.css
```css
* { box-sizing: border-box; }
body, input, select, button, h1, h2 {
  margin: 0;
  font: 400 15px/20px "Noto Sans", "Noto Sans CJK SC", sans-serif;
  color: #000;
}
button { border: 0; padding: 0; background: none; }
svg { display: block; flex: none; }
.defs { position: absolute; width: 0; height: 0; }
.i11 { width: 11px; height: 11px; }
.i18 { width: 18px; height: 18px; }
.i22 { width: 22px; height: 22px; }
.i26 { width: 27px; height: 26px; }

.app {
  position: relative;
  display: flex;
  flex-direction: column;
  height: 100vh;
  border: 1px solid #000;
  background: #f3f3f3;
  overflow: hidden;
}

/* ribbon */
.ribbon { display: flex; height: 119px; flex: none; border-bottom: 1px solid #dcdcdc; }
.group { display: flex; flex-direction: column; flex: none; height: 113px; padding-bottom: 1px; border-right: 1px solid #c6c6c6; }
.group h2 { margin-top: auto; line-height: 10px; text-align: center; white-space: nowrap; }
.body { display: flex; height: 88px; }
.big { display: flex; flex-direction: column; align-items: center; gap: 12px; padding-top: 11px; white-space: nowrap; }
.stack { display: flex; flex-direction: column; gap: 1px; }
.small { display: flex; flex: none; align-items: center; gap: 7px; height: 30px; white-space: nowrap; }
.caret { border: 4px solid transparent; border-top-color: #000; border-bottom: 0; }
.big .caret { margin-top: -3px; }
.file { width: 139px; }
.file .body { padding-left: 11px; gap: 14px; }
.grouping { width: 156px; }
.grouping .body { padding-left: 13px; gap: 14px; }
.shapes { width: 114px; }
.shapes .body { padding-left: 13px; gap: 15px; }
.joints { width: 477px; }
.joints .body { padding: 1px 2px 0 5px; }
.gallery { display: flex; flex: 1; border: 1px solid #d5d5d5; background: #f7f7f7; }
.gallery .big { flex: 1; gap: 7px; padding-top: 6px; }
.spin { display: flex; flex-direction: column; width: 18px; background: #f3f3f3; }
.spin button { display: flex; flex: 1; align-items: center; justify-content: center; border-left: 1px solid #d5d5d5; }
.spin button + button { border-top: 1px solid #d5d5d5; }
.caret.up { border-top: 0; border-bottom: 4px solid #666; }
.caret.more { position: relative; }
.caret.more::before { content: ""; position: absolute; left: -3px; top: -7px; width: 6px; border-top: 1px solid #000; }
.drive { width: 160px; }
.drive .body { padding-left: 13px; gap: 16px; }
.tools { width: 234px; }
.tools .big { flex: 0 0 55px; border-right: 1px solid #d0d0d0; }
.tools .big + .big { flex-basis: 84px; }
.tools .big:last-child { flex-basis: 94px; border: 0; }
.export { width: 144px; }
.export .body { padding-left: 13px; gap: 14px; }
.single { width: 72px; padding-left: 2px; }
.single .body { justify-content: center; }

/* docks */
.work { display: flex; flex: 1; min-height: 0; }
.dock-title { display: flex; align-items: center; gap: 7px; height: 27px; flex: none; padding: 0 4px; background: #f3f3f3; }
.dock-title h1 { margin-right: auto; padding-bottom: 2px; }
.browser { display: flex; flex-direction: column; width: 320px; flex: none; padding-bottom: 1px; background: #efefef; border-right: 1px solid #d8d8d8; }
.dock-title button { padding-bottom: 1px; }
.tools-row { display: flex; align-items: center; gap: 8px; height: 32px; padding: 0 2px 0 5px; }
.tools-row .select { margin-left: -2px; }
.browser .dock-title { padding-right: 3px; }
.select { position: relative; flex: 1; }
.select select { appearance: none; width: 100%; height: 31px; padding: 0 3px; border: 1px solid #d0d0d0; border-bottom-color: #b8b8b8; border-radius: 2px; background: #fdfdfd; }
.select svg { position: absolute; right: 5px; top: 12px; width: 12px; height: 8px; pointer-events: none; }
.search { display: flex; align-items: center; gap: 5px; height: 26px; margin: 4px 3px 3px 2px; padding-left: 7px; background: #fff; border-bottom: 1px solid #8a8a8a; }
.search svg { width: 20px; height: 19px; }
.search input { flex: 1; min-width: 0; border: 0; padding: 0; background: none; outline: 0; }
.search input::placeholder { color: #808080; opacity: 1; }
.tree-frame { display: flex; flex: 1; min-height: 0; margin-right: 1px; border: 1px solid #a0a0a0; border-left: 0; box-shadow: inset 0 1px #fff; }
.tree { flex: 1; margin: 0; padding: 2px 0 0; list-style: none; border-right: 1px solid #fafafa; overflow: hidden; }
.tree li { display: flex; height: 24px; align-items: center; }
.tree span { display: flex; flex: 1; align-items: center; gap: 7px; height: 24px; padding: 0 0 2px 4px; white-space: nowrap; }
.tw { width: 26px; height: 12px; flex: none; }
.l2 { padding-left: 25px; }
.l3 { padding-left: 50px; }
.l4 { padding-left: 75px; }
.hover span { background: #e6e6ff; }
.selected span { background: #a0d2ff; }
.scroll { display: flex; width: 17px; padding: 142px 0 18px 6px; }
.thumb { width: 2px; background: #858585; border-radius: 1px; }

.viewport { position: relative; flex: 1; min-width: 0; overflow: hidden; background: linear-gradient(#959fa8, #b3bbc4 40%, #cdd2da 72%, #dde2e6); }
.scene { width: 100%; height: 100%; }
.axis { font: 16px "Liberation Serif", serif; }
.triad { font: 14px "Liberation Serif", serif; fill: #4a4a4a; }
.navcube { font: 8px "Liberation Sans", sans-serif; fill: #333; }
.viewtools { position: absolute; top: 10px; left: 50%; display: flex; gap: 11px; transform: translateX(-50%); }

.props { display: flex; flex-direction: column; width: 318px; flex: none; border-left: 1px solid #a0a0a0; background: #f0f0f0; }
.props .dock-title { padding-right: 0; border-bottom: 1px solid #a0a0a0; }
.form { padding: 21px 19px 0 22px; }
fieldset { min-width: 0; margin: 0 0 8px; padding: 9px 11px 6px; border: 1px solid #dcdcdc; }
legend { margin-left: -4px; padding: 0 2px; }
.row { display: grid; grid-template-columns: 103px 100px auto; align-items: center; height: 34px; }
.row > span:nth-child(3) { padding-left: 8px; }
.row input[type="text"] { width: 100px; height: 27px; padding: 0 2px; border: 1px solid #e8e8e8; border-bottom-color: #868686; border-radius: 2px; background: #fff; }
.row input[type="text"]:disabled { border-color: #fafafa; background: #f0f0f0; color: #8a8a8a; }
.row .select select { height: 27px; display: block; }
.row .select svg { top: 9px; }
.row input[type="checkbox"] {
  appearance: none;
  width: 16px;
  height: 16px;
  margin: 0;
  border-radius: 3px;
  background: #005fb8 url("data:image/svg+xml,%3Csvg xmlns='http://www.w3.org/2000/svg' viewBox='0 0 16 16'%3E%3Cpath d='M4 8l3 3 5-5' fill='none' stroke='white' stroke-width='1.2'/%3E%3C/svg%3E");
}

.status { display: flex; justify-content: space-between; align-items: center; height: 28px; flex: none; padding: 2px 17px 0 5px; background: #3480d1; }
.ready { color: #fff; }
.coords { font-size: 16px; white-space: pre; }
.callouts { position: absolute; inset: 0; width: 100%; height: 100%; pointer-events: none; }
```
